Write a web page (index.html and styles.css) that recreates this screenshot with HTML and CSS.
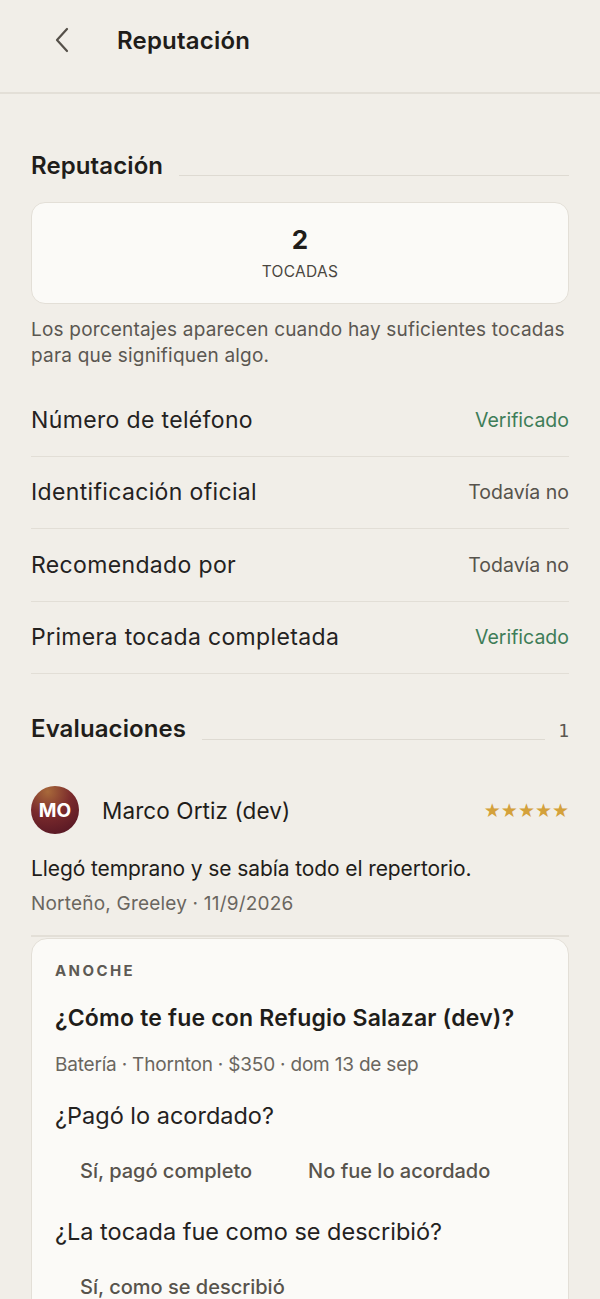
FILE: index.html
```html
<!DOCTYPE html>
<html lang="es">

<head>
    <meta charset="utf-8">
    <title>Reputación</title>
    <link rel="stylesheet" href="styles.css">
</head>

<body>
    <header class="topbar">
        <a class="back" aria-label="Volver">
            <svg width="16" height="26" viewBox="0 0 16 26" fill="none">
                <path d="M13 2 L3 13 L13 24" stroke="#555049" stroke-width="2.2" stroke-linecap="round" stroke-linejoin="round" />
            </svg>
        </a>
        <h1>Reputación</h1>
    </header>

    <main class="page">
        <div class="section-head">
            <h2>Reputación</h2>
            <span class="rule"></span>
        </div>

        <div class="stat-card">
            <div class="stat-num">2</div>
            <div class="stat-label">TOCADAS</div>
        </div>

        <p class="note">Los porcentajes aparecen cuando hay suficientes tocadas para que signifiquen algo.</p>

        <ul class="checks">
            <li><span>Número de teléfono</span><span class="ok">Verificado</span></li>
            <li><span>Identificación oficial</span><span class="no">Todavía no</span></li>
            <li><span>Recomendado por</span><span class="no">Todavía no</span></li>
            <li><span>Primera tocada completada</span><span class="ok">Verificado</span></li>
        </ul>

        <div class="section-head reviews-head">
            <h2>Evaluaciones</h2>
            <span class="rule"></span>
            <span class="count">1</span>
        </div>

        <div class="review">
            <div class="review-top">
                <div class="avatar">MO</div>
                <div class="name">Marco Ortiz (dev)</div>
                <div class="stars">★★★★★</div>
            </div>
            <p class="review-text">Llegó temprano y se sabía todo el repertorio.</p>
            <p class="review-meta">Norteño, Greeley · 11/9/2026</p>
        </div>

        <div class="ask-card">
            <div class="eyebrow">ANOCHE</div>
            <h3>¿Cómo te fue con Refugio Salazar (dev)?</h3>
            <p class="ask-meta">Batería · Thornton · $350 · dom 13 de sep</p>

            <div class="question">¿Pagó lo acordado?</div>
            <div class="options">
                <button class="opt">Sí, pagó completo</button>
                <button class="opt">No fue lo acordado</button>
            </div>

            <div class="question">¿La tocada fue como se describió?</div>
            <div class="options">
                <button class="opt">Sí, como se describió</button>
                <button class="opt">No, fue diferente a lo descrito</button>
            </div>
        </div>
    </main>
</body>

</html>
```

FILE: styles.css
```css
* {
    box-sizing: border-box;
}

body {
    margin: 0;
    background: #f1eee8;
    color: #1f1d1a;
    font-family: "Inter", "Noto Sans", sans-serif;
}

.topbar {
    height: 94px;
    display: flex;
    align-items: center;
    padding: 0 0 12px 54px;
    border-bottom: 2px solid #e3dfd7;
}

.back {
    display: flex;
    width: 30px;
    margin-right: 33px;
}

.topbar h1 {
    margin: 0;
    font-size: 24px;
    font-weight: 600;
    letter-spacing: 0.2px;
}

.page {
    padding: 0 31px;
}

.section-head {
    display: flex;
    align-items: flex-end;
    padding-top: 57px;
}

.section-head h2 {
    margin: 0;
    font-size: 24px;
    font-weight: 600;
    line-height: 30px;
    letter-spacing: 0.1px;
}

.section-head .rule {
    flex: 1;
    height: 1px;
    background: #dedad2;
    margin: 0 0 5px 16px;
}

.stat-card {
    margin-top: 21px;
    height: 102px;
    background: #fbfaf7;
    border: 1px solid #e3dfd7;
    border-radius: 14px;
    display: flex;
    flex-direction: column;
    align-items: center;
    justify-content: center;
    gap: 7px;
}

.stat-num {
    font-size: 26px;
    font-weight: 700;
    line-height: 30px;
}

.stat-label {
    font-size: 15.5px;
    line-height: 20px;
    color: #4a4640;
    letter-spacing: 0.3px;
}

.note {
    margin: 13px 0 0;
    font-size: 19px;
    line-height: 26px;
    letter-spacing: 0.2px;
    color: #5b5751;
}

.checks {
    list-style: none;
    margin: 15px 0 0;
    padding: 0;
}

.checks li {
    display: flex;
    justify-content: space-between;
    align-items: center;
    height: 72.5px;
    border-bottom: 1.5px solid #e2ded6;
    font-size: 23px;
    letter-spacing: 0.35px;
    color: #24221f;
}

.checks .ok,
.checks .no {
    font-size: 19.5px;
    letter-spacing: 0;
}

.checks .ok {
    color: #3e7d58;
}

.checks .no {
    color: #57534c;
}

.reviews-head {
    padding-top: 40px;
}

.reviews-head .rule {
    margin-right: 13px;
    margin-bottom: 4px;
}

.count {
    font-size: 18px;
    line-height: 26px;
    color: #5b5751;
    font-family: "DejaVu Sans Mono", monospace;
}

.review {
    padding: 42px 0 18px;
    border-bottom: 2px solid #e3dfd7;
}

.review-top {
    display: flex;
    align-items: center;
}

.avatar {
    width: 48px;
    height: 48px;
    border-radius: 50%;
    background: radial-gradient(circle at 35% 12%, #a8693a 0%, #7a2a2c 45%, #4c1222 100%);
    color: #fff;
    display: flex;
    align-items: center;
    justify-content: center;
    font-size: 19px;
    font-weight: 700;
}

.name {
    margin-left: 23px;
    font-size: 22.5px;
    letter-spacing: 0.1px;
    flex: 1;
}

.stars {
    color: #d4a13b;
    font-size: 19px;
    font-family: "DejaVu Sans", sans-serif;
}

.review-text {
    margin: 20px 0 0;
    font-size: 21px;
    line-height: 30px;
    letter-spacing: -0.1px;
}

.review-meta {
    margin: 7px 0 0;
    font-size: 19px;
    line-height: 26px;
    letter-spacing: 0.2px;
    color: #6a665f;
}

.ask-card {
    margin-top: 1px;
    background: #fbfaf7;
    border: 1px solid #e3dfd7;
    border-radius: 16px;
    padding: 22px 23px 40px;
}

.eyebrow {
    font-size: 15px;
    line-height: 20px;
    font-weight: 700;
    letter-spacing: 0.16em;
    color: #5e5a54;
}

.ask-card h3 {
    margin: 22px 0 0;
    font-size: 23px;
    line-height: 30px;
    font-weight: 600;
    letter-spacing: 0.2px;
}

.ask-meta {
    margin: 19px 0 0;
    font-size: 19px;
    line-height: 26px;
    letter-spacing: -0.2px;
    color: #6a665f;
}

.question {
    margin-top: 23px;
    font-size: 23.5px;
    line-height: 30px;
    letter-spacing: 0;
    color: #24221f;
}

.options {
    display: flex;
    flex-wrap: wrap;
    gap: 6px;
    margin: 17px 0 15px;
}

.opt {
    font-family: inherit;
    background: transparent;
    border: 0;
    padding: 10px 25px;
    font-size: 20px;
    line-height: 26px;
    font-weight: 500;
    color: #57534c;
}
```
